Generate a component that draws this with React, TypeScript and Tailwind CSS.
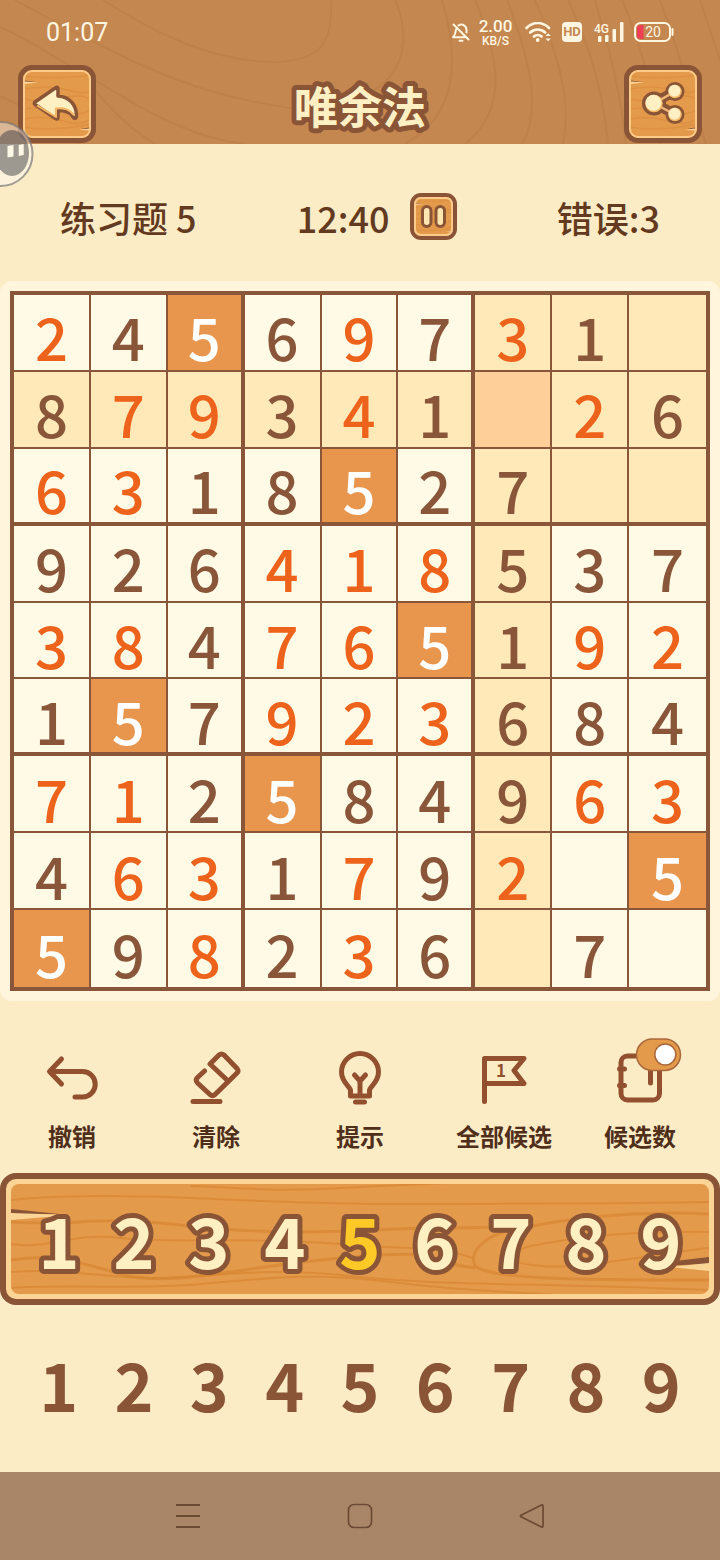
import React, { useState } from 'react';
import clsx from 'clsx';

const board = [
  '2 4 5 6 9 7 3 1 .',
  '8 7 9 3 4 1 . 2 6',
  '6 3 1 8 5 2 7 . .',
  '9 2 6 4 1 8 5 3 7',
  '3 8 4 7 6 5 1 9 2',
  '1 5 7 9 2 3 6 8 4',
  '7 1 2 5 8 4 9 6 3',
  '4 6 3 1 7 9 2 . 5',
  '5 9 8 2 3 6 . 7 .',
].map((row) => row.split(' '));

// x = filled in by the player
const filled = [
  'x...x.x..',
  '.xx.x..x.',
  'xx..x....',
  '...xxx...',
  'xx.xx..xx',
  '...xxx...',
  'xx.....xx',
  '.xx.x.x..',
  '..x.x....',
];

const digits = ['1', '2', '3', '4', '5', '6', '7', '8', '9'];

const inSelection = (row: number, col: number, sel: number[]) =>
  row === sel[0] ||
  col === sel[1] ||
  (Math.floor(row / 3) === Math.floor(sel[0] / 3) && Math.floor(col / 3) === Math.floor(sel[1] / 3));

// the selected row, column and box keep their tint even under the active digit
const cellColor = (row: number, col: number, value: string, sel: number[], active: string) => {
  if (row === sel[0] && col === sel[1]) return 'bg-[#ffcf9a]';
  if (inSelection(row, col, sel)) return 'bg-[#ffe9b9]';
  return value === active ? 'bg-[#e8964d]' : 'bg-[#fffae6]';
};

const digitColor = (row: number, col: number, value: string, sel: number[], active: string) => {
  if (value === active && !inSelection(row, col, sel)) return 'text-white';
  return filled[row][col] === 'x' ? 'text-[#ee631b]' : 'text-[#8a563a]';
};

const WoodTile: React.FC = () => (
  <svg viewBox="0 0 68 68" preserveAspectRatio="none" className="absolute inset-0 h-full w-full" aria-hidden="true">
    <rect width="68" height="68" fill="#e49a4b" />
    <g fill="none" stroke="#d88a3a" strokeWidth="1.500" strokeOpacity="0.600">
      <path d="M0 6Q30 10 68 5M0 19Q26 15 44 20T68 20M0 29Q20 33 40 28T68 30M0 39Q24 35 42 41T68 39M0 49Q20 45 40 51T68 48M0 57Q30 62 68 54" />
    </g>
    <path d="M2 10.500l11 1.500-11 .5z" fill="#8a5437" />
    <path d="M2 11.500l13 1-13 1.500z" fill="#fbd596" />
    <path d="M66 57.500l-8 1.500h8z" fill="#8a5437" />
    <path d="M66 58.500l-10 1.200 10 .8z" fill="#fbd596" />
  </svg>
);

type OutlinedTextProps = { text: string; className: string; viewBox: string; x: number; y: number; size: number; fill: string };

const OutlinedText: React.FC<OutlinedTextProps> = ({ text, className, viewBox, x, y, size, fill }) => (
  <svg viewBox={viewBox} className={className}>
    <text x={x} y={y} fontSize={size} fontWeight="700" textAnchor="middle" fill={fill} stroke="#8a5437" strokeWidth="10" strokeLinejoin="round" paintOrder="stroke">
      {text}
    </text>
  </svg>
);

const StatusBar: React.FC = () => (
  <div className="flex h-16 items-center justify-between px-[46px] font-['Roboto',sans-serif] text-[#fff6e2]">
    <span className="pt-0.5 text-[25px]">01:07</span>
    <div className="flex items-center">
      <svg viewBox="0 0 18 20" className="mr-2 h-5 w-[18px]" fill="none" stroke="currentColor" strokeWidth="2" strokeLinecap="round" strokeLinejoin="round">
        <path d="M6.500 3.500C10.500 1 14.500 4 14.500 8v2.500M4 7.500C3.700 11 3 13 1.200 15.200h12.500M1.500 2.500l15 15M7.500 18.800h3" />
      </svg>
      <div className="mr-3 flex w-[35px] flex-col items-center font-medium">
        <span className="text-[17px] leading-[17px]">2.00</span>
        <span className="text-[12px] leading-[12px]">KB/S</span>
      </div>
      <svg viewBox="0 0 27 20" className="mr-2.5 h-5 w-[27px]" fill="none" stroke="currentColor" strokeWidth="2.600" strokeLinecap="round">
        <path d="M1.500 6C8-.6 17.500-.6 24 6M5.200 10.500c4.500-4 10.500-4 15 0M9 14.500c2-2 5.500-2 7.500 0" />
        <circle cx="12.700" cy="18" r="1.900" fill="currentColor" stroke="none" />
        <path d="M20.500 14l2.700-2.700 2.700 2.700zM20.500 16.500l2.700 2.700 2.700-2.700z" fill="currentColor" stroke="none" />
      </svg>
      <span className="mr-3 flex h-5 w-5 items-center justify-center rounded-[4px] bg-[#fff6e2] text-[13px] font-bold text-[#c4874f]">HD</span>
      <svg viewBox="0 0 30 20" className="mr-2.5 h-5 w-[30px] overflow-visible" fill="currentColor">
        <text x="0" y="11" fontSize="12" fontWeight="500">4G</text>
        <rect x="4" y="14" width="3.500" height="6" rx="1" />
        <rect x="11" y="13" width="3.500" height="7" rx="1" />
        <rect x="18.500" y="7" width="3.500" height="13" rx="1" />
        <rect x="26" y="0" width="3.500" height="20" rx="1" />
      </svg>
      <svg viewBox="0 0 40 20" className="h-5 w-10" fill="none">
        <path d="M9.500 3H7a4 4 0 0 0-4 4v6a4 4 0 0 0 4 4h2.500z" fill="#ee3f55" />
        <rect x="1" y="1" width="35" height="18" rx="5.500" stroke="currentColor" strokeWidth="2" />
        <path d="M38.500 7v6" stroke="currentColor" strokeWidth="2" strokeLinecap="round" />
        <text x="19" y="15" fontSize="14" textAnchor="middle" fill="currentColor">20</text>
      </svg>
    </div>
  </div>
);

const Header: React.FC = () => (
  <header className="relative bg-[#c4874f]">
    <svg viewBox="0 0 720 144" preserveAspectRatio="none" className="absolute inset-0 h-full w-full" fill="none" stroke="#b97b43" strokeWidth="2" strokeOpacity="0.450" aria-hidden="true">
      <path d="M103 0C150 30 210 62 275 62 320 60 333 45 331 0" />
      <path d="M15 0C60 25 80 35 110 50 170 80 220 98 290 108 390 110 420 60 395 0" />
      <path d="M0 27C40 45 60 62 95 80 140 108 190 138 245 144" />
      <path d="M0 96C20 106 60 122 80 144M80 70C100 100 130 130 155 144" />
      <path d="M442 0C460 60 458 115 405 144M475 0C500 60 508 110 465 144M507 0C530 60 542 110 522 144M535 0C558 55 572 100 563 144" />
      <path d="M568 0C592 50 604 100 608 144M595 0C610 50 620 90 626 144M622 0C640 40 650 80 660 144M660 0C675 40 690 90 706 144M700 0L720 60" />
    </svg>
    <div className="relative">
      <StatusBar />
      <div className="flex items-center justify-between px-[18px] py-px">
        <button type="button" aria-label="返回" className="relative h-[78px] w-[78px] overflow-hidden rounded-[14px] border-[5px] border-[#8a5437]">
          <WoodTile />
          <span className="absolute inset-0 rounded-[9px] border-2 border-[#fccb8b]" />
          <svg viewBox="0 0 68 68" className="relative h-[68px] w-[68px]">
            <path d="M12 32L33 17.500q2-1 2 1.500v7c12 1 18.500 9 18.500 20-.3 3-2.500 3-3.500 1-2.500-5-7-6.500-15-6.500v7q0 2.500-2.500 1L12 34.500q-1.500-1.200 0-2.500z" fill="#fff0c4" stroke="#8a5437" strokeWidth="3.500" strokeLinejoin="round" />
            <path d="M14 35.500L33 47v-8.500c9-1 13.500 1 18 6.500" fill="none" stroke="#f5b763" strokeWidth="2" strokeLinejoin="round" />
          </svg>
        </button>
        <h1>
          <OutlinedText text="唯余法" className="h-[66px] w-40" viewBox="0 0 160 66" x={80} y={53} size={44} fill="#fff0c4" />
        </h1>
        <button type="button" aria-label="分享" className="relative h-[78px] w-[78px] overflow-hidden rounded-[14px] border-[5px] border-[#8a5437]">
          <WoodTile />
          <span className="absolute inset-0 rounded-[9px] border-2 border-[#fccb8b]" />
          <svg viewBox="0 0 68 68" className="relative h-[68px] w-[68px]">
            <path d="M46 21L25 33l21 11.500" fill="none" stroke="#8a5437" strokeWidth="10" />
            <g fill="#8a5437">
              <circle cx="46" cy="21.500" r="9.500" />
              <circle cx="25" cy="33.500" r="12" />
              <circle cx="46" cy="44.500" r="9.500" />
            </g>
            <path d="M46 21.500L25 33.500l21 11" fill="none" stroke="#f0b678" strokeWidth="2.500" />
            <g fill="#f5b763">
              <circle cx="46" cy="21.500" r="6.800" />
              <circle cx="25" cy="33.500" r="8.800" />
              <circle cx="46" cy="44.500" r="6.800" />
            </g>
            <g fill="#fff0c4">
              <circle cx="45.500" cy="20.800" r="6" />
              <circle cx="24.500" cy="32.800" r="8" />
              <circle cx="45.500" cy="43.800" r="6" />
            </g>
          </svg>
        </button>
      </div>
    </div>
    {/* floating assistant ball, docked to the left edge */}
    <svg viewBox="0 0 34 68" className="absolute top-[120px] left-0 h-[68px] w-[34px]" aria-hidden="true">
      <circle cx="0.500" cy="34" r="32" fill="#fff" fillOpacity="0.400" stroke="#777" strokeOpacity="0.700" strokeWidth="2" />
      <ellipse cx="12" cy="33" rx="17" ry="23" fill="#3d3f44" fillOpacity="0.500" />
      <path d="M7.500 26l6-1v11.500l-6 1zM18.700 25l5-1v11l-5 1z" fill="#fff8e6" />
    </svg>
  </header>
);

type ToolProps = { label: string; children: React.ReactNode };

const Tool: React.FC<ToolProps> = ({ label, children }) => (
  <button type="button" className="flex flex-col items-center gap-3 text-[#4f2e1a]">
    <svg viewBox="0 0 56 56" className="h-14 w-14" fill="none" stroke="#92502f" strokeWidth="5" strokeLinecap="round" strokeLinejoin="round">
      {children}
    </svg>
    <span className="text-[24px] leading-[36px] font-bold whitespace-nowrap">{label}</span>
  </button>
);

const App: React.FC = () => {
  const [selected, setSelected] = useState([1, 6]);
  const [active, setActive] = useState('5');
  const [candidates, setCandidates] = useState(true);

  return (
    <div className="min-h-screen bg-[#fcecc6] font-['Noto_Sans_CJK_SC',sans-serif]">
      <Header />

      <section className="flex h-[137px] items-center justify-between px-15 pt-2 text-[36px] leading-none font-medium text-[#633a20]">
        <span>练习题 5</span>
        <div className="flex items-center gap-5">
          <span>12:40</span>
          <button type="button" aria-label="暂停" className="relative h-[47px] w-[47px] overflow-hidden rounded-[11px] border-4 border-[#8a5437]">
            <WoodTile />
            <span className="absolute inset-0 rounded-[7px] border-2 border-[#fccb8b]" />
            <svg viewBox="0 0 39 39" className="relative h-[39px] w-[39px]" fill="#ffe6b0" stroke="#8a5437" strokeWidth="3">
              <rect x="8.500" y="9.500" width="8.500" height="20" rx="4.200" />
              <rect x="22" y="9.500" width="8.500" height="20" rx="4.200" />
            </svg>
          </button>
        </div>
        <span>错误:3</span>
      </section>

      <main className="rounded-[12px] bg-[#fff5dc] p-2.5">
        <div className="grid aspect-square grid-cols-9 grid-rows-9 border-4 border-[#8a563a]">
          {board.map((row, r) =>
            row.map((value, c) => (
              <button
                key={`${r}-${c}`}
                type="button"
                aria-label={`${r + 1}-${c + 1}`}
                onClick={() => setSelected([r, c])}
                className={clsx(
                  'flex min-h-0 min-w-0 items-center justify-center border-[#8a563a] pt-2 text-[58px] leading-none font-medium',
                  c === 8 ? 'border-r-0' : c % 3 === 2 ? 'border-r-4' : 'border-r-2',
                  r === 8 ? 'border-b-0' : r % 3 === 2 ? 'border-b-4' : 'border-b-2',
                  cellColor(r, c, value, selected, active),
                  digitColor(r, c, value, selected, active),
                )}
              >
                {value === '.' ? '' : value}
              </button>
            )),
          )}
        </div>
      </main>

      <section className="grid h-[172px] grid-cols-5 items-start pt-[49px]">
        <Tool label="撤销">
          <path d="M17.500 9L5.500 21.500 17.500 34M6 21.500h32.500a12.700 12.700 0 0 1 0 25.500H31" />
        </Tool>
        <Tool label="清除">
          <path d="M16.500 21L9.500 27.500q-2.500 2.500 0 5.500L22 44.500q2.500 2.500 5 0L49 23q2-2 0-4.500L36 5q-2.500-2-5 0L22 14l17 16M5 51.500h27" />
        </Tool>
        <Tool label="提示">
          <path d="M18.500 46v-6C17.500 36 9.500 32 9.500 22a18.500 18.500 0 0 1 37 0c0 10-8 14-9 18v6zM22.500 25l5.500 6 5.500-6M28 31v14M23.500 52h9" />
        </Tool>
        <Tool label="全部候选">
          <path d="M8.500 51.500V8.500H48L38 20.500l10 13H9" />
          <text x="25" y="27" fontSize="17" fontWeight="700" textAnchor="middle" fill="#92502f" stroke="none">1</text>
        </Tool>
        <label className="flex cursor-pointer flex-col items-center gap-3 pr-4 text-[#4f2e1a]">
          <input type="checkbox" className="sr-only" checked={candidates} onChange={(e) => setCandidates(e.target.checked)} />
          <svg viewBox="0 0 56 56" className="h-14 w-14 overflow-visible" fill="none" stroke="#92502f" strokeWidth="5" strokeLinecap="round">
            <rect x="9" y="6" width="38.500" height="44" rx="6.500" />
            <path d="M7.500 19h5M7.500 35.500h5M38.500 18v15" />
            <rect x="24.500" y="-11" width="44" height="31.500" rx="15.700" fill={candidates ? '#e49a4b' : '#cbb79c'} stroke="#a9683c" strokeWidth="1.500" />
            <circle cx={candidates ? 53.3 : 40} cy="4.500" r="10.500" fill="#fff" stroke="#a9683c" strokeWidth="1.500" />
          </svg>
          <span className="text-[24px] leading-[36px] font-bold whitespace-nowrap">候选数</span>
        </label>
      </section>

      <section className="relative h-[132px] overflow-hidden rounded-[16px] border-[6px] border-[#8a5437] bg-[#fbd496] p-[5px]">
        <svg viewBox="0 0 698 110" preserveAspectRatio="none" className="h-full w-full rounded-[8px]" aria-hidden="true">
          <rect width="698" height="110" fill="#e49a4b" />
          <g fill="none" stroke="#d6832f" strokeWidth="2" strokeOpacity="0.600">
            <path d="M0 16C60 10 130 12 180 14S300 20 400 20 560 20 698 18" />
            <path d="M180 2C240 4 260 8 330 4S420 0 460 -2" />
            <path d="M0 38C60 42 90 32 160 40S280 50 360 46 440 46 510 42" strokeWidth="3" />
            <path d="M0 60C40 66 60 48 110 54S230 52 330 60 420 60 462 74" />
            <path d="M0 76C40 70 60 76 110 90S220 84 330 74 400 76 464 84" strokeWidth="3" />
            <path d="M0 88C60 84 90 94 140 94S250 82 340 92 500 98 698 106" />
            <path d="M0 104C60 100 120 106 190 100S300 88 380 98 480 106 560 112" />
            <path d="M698 30C620 26 550 36 510 44 470 50 458 70 464 82 480 96 580 96 698 96" strokeWidth="3" />
            <path d="M698 48C620 46 560 54 520 62 490 70 490 78 530 82S640 70 698 64" />
          </g>
          <path d="M0 25l48 5-48 0z" fill="#8a5437" />
          <path d="M0 29l60 2-60 5z" fill="#fbd596" />
          <path d="M698 73l-34 4-20 5 54-2z" fill="#8a5437" />
          <path d="M698 79l-40 4 40 4z" fill="#fbd596" />
        </svg>
        <div className="absolute inset-0 grid grid-cols-9 items-center px-[15px]">
          {digits.map((d) => (
            <button key={d} type="button" onClick={() => setActive(d)} className="flex justify-center">
              <OutlinedText text={d} className="h-[104px] w-[70px]" viewBox="0 0 70 104" x={35} y={82} size={70} fill={d === active ? '#fdc927' : '#fff0c4'} />
            </button>
          ))}
        </div>
      </section>

      <section className="grid h-[167px] grid-cols-9 items-center px-[21px] pb-3 text-center text-[66px] leading-none font-bold text-[#8a5437]">
        {digits.map((d) => (
          <button key={d} type="button">
            {d}
          </button>
        ))}
      </section>

      <nav className="grid h-22 grid-cols-3 items-center bg-[#aa8668] px-[102px]">
        <button type="button" aria-label="菜单" className="flex justify-center">
          <svg viewBox="0 0 26 26" className="h-[26px] w-[26px]" stroke="#6b4a33" strokeWidth="2">
            <path d="M1 2h24M1 13h24M1 24h24" />
          </svg>
        </button>
        <button type="button" aria-label="主页" className="flex justify-center">
          <svg viewBox="0 0 26 26" className="h-[26px] w-[26px]" fill="none" stroke="#6b4a33" strokeWidth="1.700">
            <rect x="1.500" y="1.500" width="23" height="23" rx="5.500" />
          </svg>
        </button>
        <button type="button" aria-label="后退" className="flex justify-center">
          <svg viewBox="0 0 26 26" className="h-[26px] w-[26px]" fill="none" stroke="#6b4a33" strokeWidth="1.700" strokeLinejoin="round">
            <path d="M2 12.200L22.500 2q1.500-.5 1.500 1v20q0 1.500-1.500 1L2 13.800q-1-.8 0-1.600z" />
          </svg>
        </button>
      </nav>
    </div>
  );
};

export default App;
